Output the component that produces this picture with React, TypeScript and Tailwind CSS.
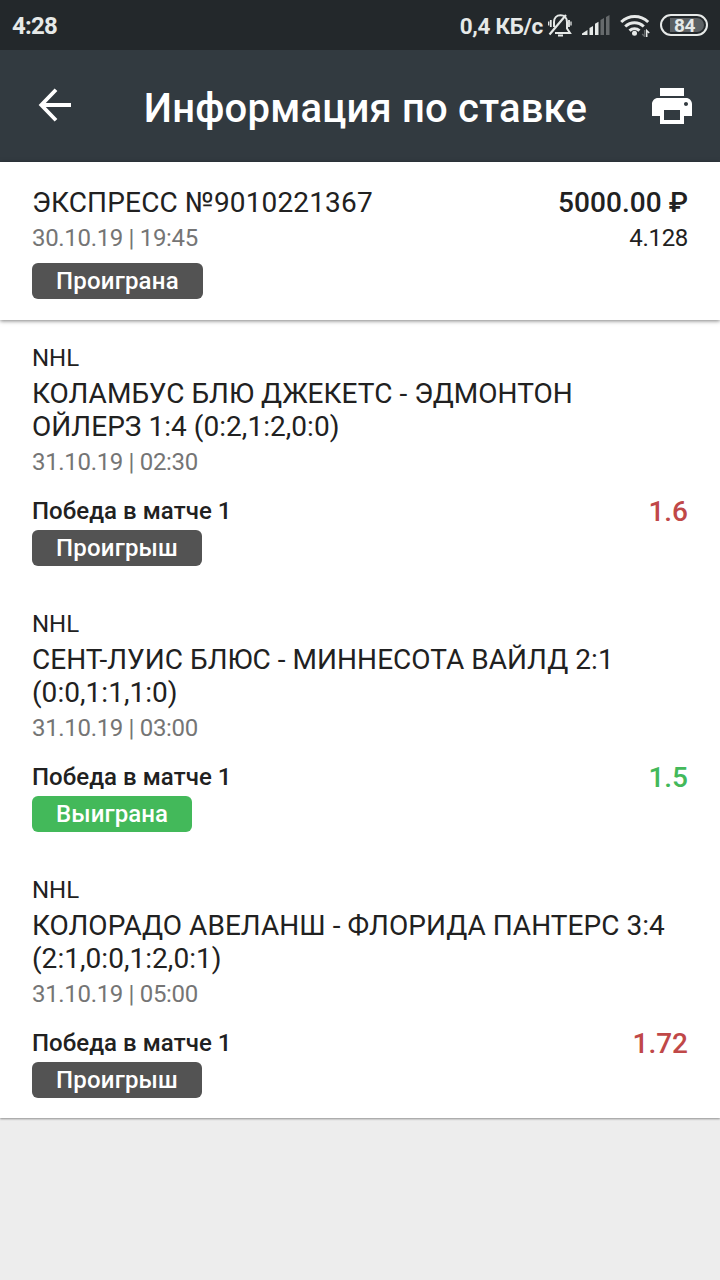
import React from 'react';
import { MdPrint } from 'react-icons/md';

interface BetEvent {
  league: string;
  title: string;
  date: string;
  outcome: string;
  odds: string;
  status: 'won' | 'lost';
}

const events: BetEvent[] = [
  {
    league: 'NHL',
    title: 'КОЛАМБУС БЛЮ ДЖЕКЕТС - ЭДМОНТОН ОЙЛЕРЗ 1:4 (0:2,1:2,0:0)',
    date: '31.10.19 | 02:30',
    outcome: 'Победа в матче 1',
    odds: '1.6',
    status: 'lost',
  },
  {
    league: 'NHL',
    title: 'СЕНТ-ЛУИС БЛЮС - МИННЕСОТА ВАЙЛД 2:1 (0:0,1:1,1:0)',
    date: '31.10.19 | 03:00',
    outcome: 'Победа в матче 1',
    odds: '1.5',
    status: 'won',
  },
  {
    league: 'NHL',
    title: 'КОЛОРАДО АВЕЛАНШ - ФЛОРИДА ПАНТЕРС 3:4 (2:1,0:0,1:2,0:1)',
    date: '31.10.19 | 05:00',
    outcome: 'Победа в матче 1',
    odds: '1.72',
    status: 'lost',
  },
];

const MutedBell = () => (
  <svg width="26" height="26" viewBox="0 0 26 26" fill="none" stroke="#e6e9e8" strokeWidth="1.8">
    <path d="M9 21h15l-3-4.500V10c0-4-2.500-6.700-6.500-6.700S8 6 8 10v5" strokeWidth="2" />
    <path d="M3.500 22.500 20 3" strokeWidth="2.200" />
    <path d="M4.800 8v7M23 8v7" strokeWidth="1.800" />
    <path d="M2.700 9.500v4M25 9.500v4" strokeWidth="1.300" />
    <path d="M12 23.500h5" strokeWidth="2" />
  </svg>
);

const Signal = () => (
  <svg width="28" height="20" viewBox="0 0 28 20" fill="#e6e9e8">
    <path d="M0 20v-1.500L5.500 15v5z" />
    <path d="M7.500 20v-7l3.500-2v9z" />
    <path d="M13 20V8.800L16.500 6.700V20z" />
    <path d="M18.500 20V5L22 3v17zM24 20V2l3.500-2v20z" fill="#666a6c" />
  </svg>
);

const Wifi = () => (
  <svg width="30" height="24" viewBox="0 0 30 24" fill="none" stroke="#e6e9e8" strokeWidth="3">
    <path d="M1.200 9c8-7.300 19-7.300 27 0" />
    <path d="M5.200 13.500c5.500-5 13.100-5 18.600 0" />
    <path d="M9.500 17.700c3-2.700 7-2.700 10 0" />
    <circle cx="14.500" cy="20.300" r="2.500" fill="#e6e9e8" stroke="none" />
    <path d="M24.700 17v6.500l-2.500-2.500" stroke="#666a6c" strokeWidth="1.500" />
    <path d="M26.700 24v-6.500l2.500 2.500" strokeWidth="1.500" />
  </svg>
);

const StatusBar = () => (
  <div className="flex h-[50px] items-center bg-[#23282b] px-3 text-[#e6e9e8]">
    <span className="pt-0.5 text-[24px] leading-7 font-bold tracking-[-0.8px]">4:28</span>
    <div className="ml-auto flex items-center">
      <span className="pt-0.5 text-[22.500px] leading-7 font-bold tracking-[-0.3px]">0,4 КБ/с</span>
      <div className="ml-[3px]">
        <MutedBell />
      </div>
      <div className="ml-[10px]">
        <Signal />
      </div>
      <div className="ml-[10px]">
        <Wifi />
      </div>
      <div className="ml-[10px] flex h-[22px] w-12 items-center justify-center rounded-full border-2 border-[#e6e9e8]">
        <div className="ml-1.5 flex h-[14px] w-[34px] items-center rounded-r-full bg-[#5b6063] pl-1 text-[19px] leading-none font-bold tracking-[-0.5px]">
          84
        </div>
      </div>
    </div>
  </div>
);

const Header = () => (
  <header className="flex h-28 items-center bg-[#323a40] pr-6 pl-[38px] text-white">
    <svg className="mb-0.5" width="34" height="34" viewBox="0 0 34 34" fill="none" stroke="currentColor" strokeWidth="3.800">
      <path d="M18 1.800 3.300 17 18 32.200M3.500 17h29.500" />
    </svg>
    <h1 className="flex-1 pt-1 pl-[11px] text-center text-[40px] leading-[47px] font-medium tracking-[0.2px]">
      Информация по ставке
    </h1>
    <MdPrint size={48} />
  </header>
);

const StatusBadge = ({ label, won = false }: { label: string; won?: boolean }) => (
  <span
    className={`block h-9 w-fit rounded-md px-6 text-[24px] leading-9 font-medium text-white ${
      won ? 'bg-[#43b95a] tracking-[0.1px]' : 'bg-[#535353] tracking-[0.2px]'
    }`}
  >
    {label}
  </span>
);

const EventRow: React.FC<{ event: BetEvent }> = ({ event }) => {
  const won = event.status === 'won';
  return (
    <div className="px-8 pt-6 pb-5">
      <div className="text-[24px] leading-7">{event.league}</div>
      <div className="mt-[5px] pr-5 text-[28px] leading-[33px] tracking-[0.04px]">
        {event.title}
      </div>
      <div className="mt-[5px] text-[24px] leading-7 tracking-[-0.33px] text-[#757575]">
        {event.date}
      </div>
      <div className="mt-[21px] flex h-7 items-center justify-between">
        <span className="text-[24px] leading-7 font-medium tracking-[0.05px]">{event.outcome}</span>
        <span
          className={`pt-0.5 text-[28px] leading-7 font-medium ${won ? 'text-[#43b95a]' : 'text-[#c04848]'}`}
        >
          {event.odds}
        </span>
      </div>
      <div className="mt-[5px]">
        <StatusBadge label={won ? 'Выиграна' : 'Проигрыш'} won={won} />
      </div>
    </div>
  );
};

const App = () => {
  return (
    <div className="h-[1280px] w-[720px] overflow-hidden bg-[#ededed] font-['Roboto','Noto_Sans',sans-serif] text-[#212121]">
      <StatusBar />
      <Header />
      <main>
        <section className="relative h-[158px] bg-white px-8 pt-6 shadow-[0_1px_4px_rgba(0,0,0,0.5)]">
          <div className="flex justify-between text-[28px] leading-[33px]">
            <span className="tracking-[0.15px]">ЭКСПРЕСС №9010221367</span>
            <span className="font-medium tracking-[0.05px]">5000.00 ₽</span>
          </div>
          <div className="mt-[5px] mb-[11px] flex justify-between text-[24px] leading-7 tracking-[-0.33px]">
            <span className="text-[#757575]">30.10.19 | 19:45</span>
            <span>4.128</span>
          </div>
          <StatusBadge label="Проиграна" />
        </section>
        <section className="bg-white shadow-[0_1px_2px_rgba(0,0,0,0.4)]">
          {events.map((event) => (
            <EventRow key={event.title} event={event} />
          ))}
        </section>
      </main>
    </div>
  );
};

export default App;
